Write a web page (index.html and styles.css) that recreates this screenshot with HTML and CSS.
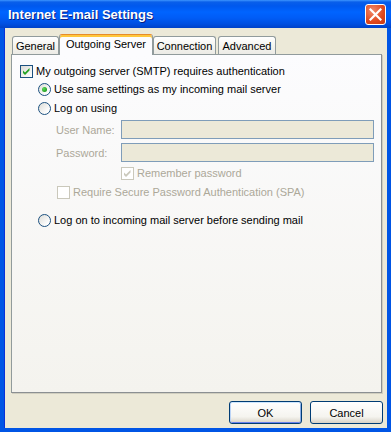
FILE: index.html
```html
<!DOCTYPE html>
<html lang="en">
<head>
    <meta charset="UTF-8">
    <title>Internet E-mail Settings</title>
    <link rel="stylesheet" href="styles.css">
</head>
<body>
    <div class="window">
        <!-- Title Bar -->
        <div class="titlebar">
            <span class="title">Internet E-mail Settings</span>
            <div class="close-button">
                <svg width="13" height="13" viewBox="0 0 13 13">
                    <path d="M1.5 1.5 L11.5 11.5 M11.5 1.5 L1.5 11.5" stroke="#fff" stroke-width="2.2" stroke-linecap="square"/>
                </svg>
            </div>
        </div>

        <div class="client">
            <!-- Tabs -->
            <div class="tabs">
                <div class="tab tab-general">General</div>
                <div class="tab tab-active">Outgoing Server</div>
                <div class="tab tab-connection">Connection</div>
                <div class="tab tab-advanced">Advanced</div>
            </div>

            <!-- Tab Panel -->
            <div class="panel">
                <div class="row row-auth">
                    <span class="checkbox">
                        <svg width="11" height="11" viewBox="0 0 11 11"><path d="M2 4.5 L4 6.5 L8.5 2 L8.5 4.5 L4 9 L2 7 Z" fill="#21A121"/></svg>
                    </span>
                    <span class="label">My outgoing server (SMTP) requires authentication</span>
                </div>
                <div class="row row-same">
                    <span class="radio checked"></span>
                    <span class="label">Use same settings as my incoming mail server</span>
                </div>
                <div class="row row-logon">
                    <span class="radio"></span>
                    <span class="label">Log on using</span>
                </div>
                <div class="row field-row">
                    <span class="field-label">User Name:</span>
                    <span class="field"></span>
                </div>
                <div class="row field-row">
                    <span class="field-label">Password:</span>
                    <span class="field"></span>
                </div>
                <div class="row row-remember">
                    <span class="checkbox disabled">
                        <svg width="11" height="11" viewBox="0 0 11 11"><path d="M2 4.5 L4 6.5 L8.5 2 L8.5 4.5 L4 9 L2 7 Z" fill="#CAC8BB"/></svg>
                    </span>
                    <span class="label muted">Remember password</span>
                </div>
                <div class="row row-spa">
                    <span class="checkbox disabled"></span>
                    <span class="label muted">Require Secure Password Authentication (SPA)</span>
                </div>
                <div class="row row-incoming">
                    <span class="radio"></span>
                    <span class="label">Log on to incoming mail server before sending mail</span>
                </div>
            </div>

            <!-- Dialog Buttons -->
            <div class="buttons">
                <div class="button default">OK</div>
                <div class="button">Cancel</div>
            </div>
        </div>
    </div>
</body>
</html>
```

FILE: styles.css
```css
/* Global Styles */
body {
    margin: 0;
    padding: 0;
    font-family: 'Liberation Sans', Arial, sans-serif;
    font-size: 11px;
    color: #000;
    background: #0055E5;
}

.window {
    width: 391px;
    height: 432px;
    display: flex;
    flex-direction: column;
    overflow: hidden;
}

/* Title Bar */
.titlebar {
    height: 28px;
    flex: none;
    display: flex;
    align-items: center;
    justify-content: space-between;
    padding: 0 5px 0 8px;
    box-sizing: border-box;
    background: linear-gradient(#3D95FF 0, #0A5FEA 2px, #0058EE 6px, #0064FF 12px, #005CF6 18px, #004FE0 24px, #0042C8 28px);
}

.title {
    color: #fff;
    font-weight: bold;
    font-size: 13px;
    text-shadow: 1px 1px 0 #0A1E80;
    margin-top: 1px;
}

.close-button {
    width: 19px;
    height: 19px;
    border: 1px solid #fff;
    border-radius: 3px;
    background: radial-gradient(circle at 35% 30%, #F08A6C, #E0481E 60%, #C8380F);
    display: flex;
    align-items: center;
    justify-content: center;
    margin-top: 1px;
}

/* Client Area */
.client {
    flex: 1;
    display: flex;
    flex-direction: column;
    background: #ECE9D8;
    border-left: 4px solid #0055E5;
    border-right: 4px solid #0055E5;
    border-bottom: 4px solid #0055E5;
    box-shadow: inset 1px 0 0 #0831D9;
    padding: 6px 5px 4px 7px;
}

/* Tabs */
.tabs {
    display: flex;
    align-items: flex-end;
    height: 20px;
    padding-left: 1px;
    position: relative;
    z-index: 1;
}

.tab {
    box-sizing: border-box;
    height: 18px;
    border: 1px solid #919B9C;
    border-bottom: none;
    border-radius: 3px 3px 0 0;
    background: linear-gradient(#FFFFFF, #F3F2EC 60%, #ECEBE6);
    display: flex;
    align-items: center;
    justify-content: center;
    padding-top: 1px;
}

.tab-general {
    width: 47px;
}

.tab-active {
    width: 94px;
    height: 21px;
    margin-bottom: -1px;
    background: #FCFCFE;
    border-top: 1px solid #E68B2C;
    box-shadow: inset 0 2px 0 #FFC73C;
    padding-top: 0;
    padding-bottom: 3px;
}

.tab-connection {
    width: 63px;
}

.tab-advanced {
    width: 58px;
    margin-left: 2px;
}

/* Tab Panel */
.panel {
    height: 339px;
    box-sizing: border-box;
    border: 1px solid #919B9C;
    border-right-color: #8B8F92;
    border-bottom-color: #8B8F92;
    box-shadow: 1px 1px 0 #D0CEBF;
    background: linear-gradient(#FCFCFE, #F4F3EE);
    padding-top: 8px;
}

.row {
    display: flex;
    align-items: center;
    height: 16px;
}

.row-auth {
    padding-left: 8px;
}

.row-same {
    margin-top: 2px;
    padding-left: 26px;
}

.row-logon {
    margin-top: 3px;
    padding-left: 26px;
}

.field-row {
    height: 19px;
    margin-top: 4px;
    padding-left: 44px;
}

.row-remember {
    margin-top: 3px;
    padding-left: 109px;
}

.row-spa {
    margin-top: 3px;
    padding-left: 45px;
}

.row-incoming {
    margin-top: 12px;
    padding-left: 26px;
}

.label {
    margin-left: 3px;
    white-space: nowrap;
}

.muted,
.field-label {
    color: #ACA899;
}

.field-label {
    width: 65px;
}

.field {
    width: 253px;
    height: 19px;
    box-sizing: border-box;
    border: 1px solid #7F9DB9;
    background: #ECE9D8;
}

/* Checkbox */
.checkbox {
    width: 13px;
    height: 13px;
    box-sizing: border-box;
    border: 1px solid #1C5180;
    background: linear-gradient(135deg, #DCDCD7, #FFFFFF);
    display: flex;
    align-items: center;
    justify-content: center;
}

.checkbox.disabled {
    border-color: #CAC8BB;
    background: #FFFFFF;
}

/* Radio */
.radio {
    width: 13px;
    height: 13px;
    box-sizing: border-box;
    border: 1px solid #1C5180;
    border-radius: 50%;
    background: linear-gradient(135deg, #DCDCD7, #FFFFFF 80%);
    display: flex;
    align-items: center;
    justify-content: center;
}

.radio.checked::after {
    content: "";
    width: 5px;
    height: 5px;
    border-radius: 50%;
    background: radial-gradient(circle at 35% 35%, #5ED85A, #21A121 70%);
}

/* Dialog Buttons */
.buttons {
    display: flex;
    justify-content: flex-end;
    gap: 8px;
    margin-top: 8px;
    margin-right: -1px;
}

.button {
    width: 73px;
    height: 23px;
    box-sizing: border-box;
    border: 1px solid #003C74;
    border-radius: 3px;
    background: linear-gradient(#FFFFFF, #F5F4EF 70%, #D8D2C6);
    display: flex;
    align-items: center;
    justify-content: center;
}

.button.default {
    box-shadow: inset 0 1px 0 #CEE7FF, inset 1px 0 0 #BCD4F6, inset -1px 0 0 #89ADE4, inset 0 -1px 0 #6982EE;
}
```
